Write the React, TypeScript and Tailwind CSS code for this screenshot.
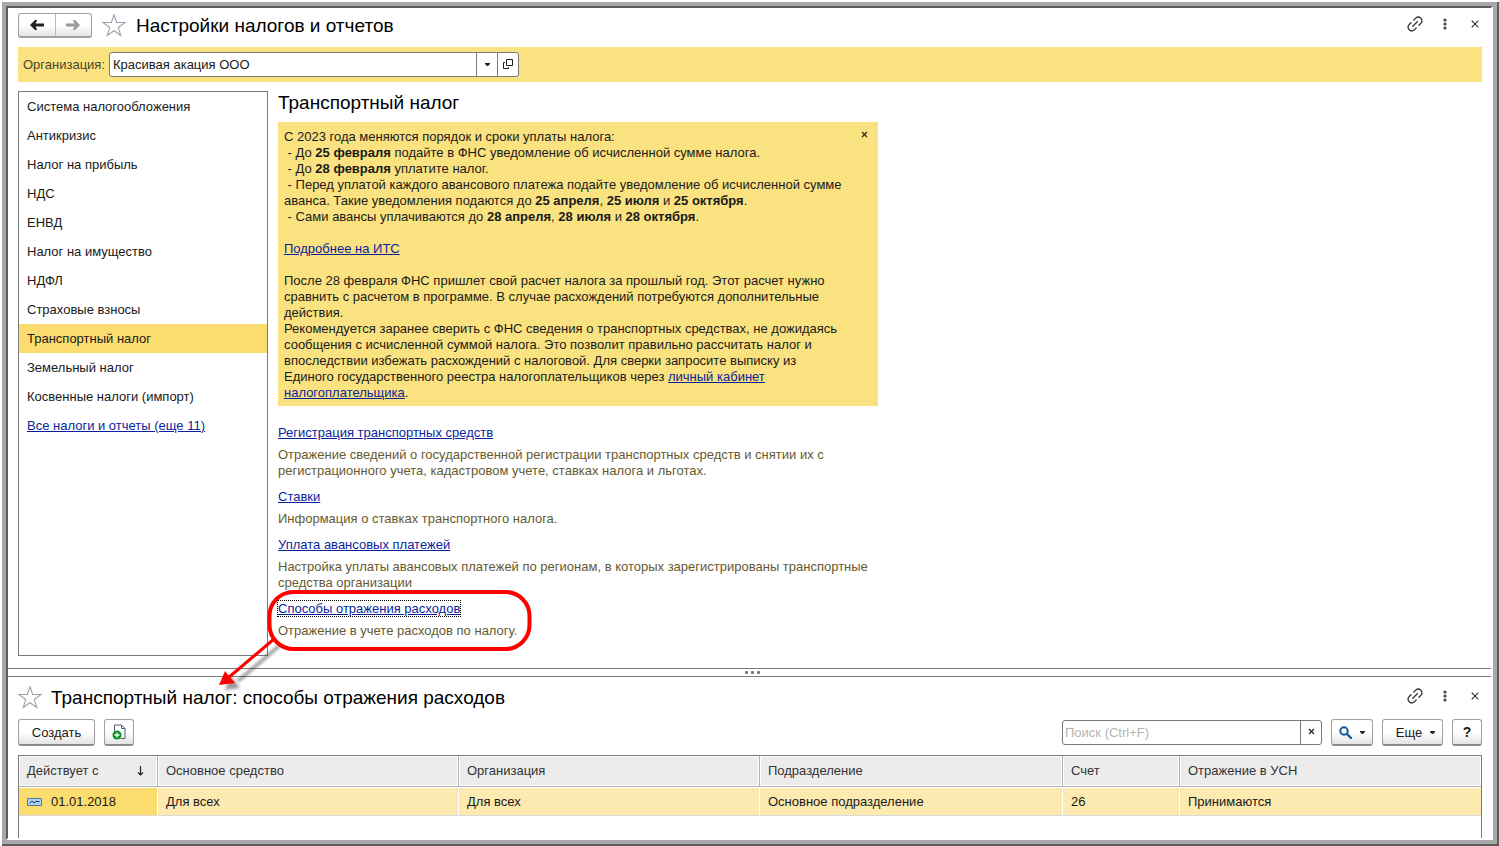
import type { ReactNode } from "react";

const taxes = [
  "Система налогообложения",
  "Антикризис",
  "Налог на прибыль",
  "НДС",
  "ЕНВД",
  "Налог на имущество",
  "НДФЛ",
  "Страховые взносы",
  "Транспортный налог",
  "Земельный налог",
  "Косвенные налоги (импорт)",
];

const columns = ["Действует с", "Основное средство", "Организация", "Подразделение", "Счет", "Отражение в УСН"];

const buttonClass =
  "flex items-center justify-center rounded-[3px] border border-[#a0a0a0] border-b-2 border-b-[#8c8c8c] bg-linear-to-b from-white from-50% to-[#e4e4e4]";

function Star() {
  return (
    <svg width="24" height="24" viewBox="0 1 24 24" fill="#fff" stroke="#9ba5b0" strokeWidth="1.100">
      <path d="M12 1.800 14.700 9.500H23l-6.800 5 2.600 8L12 17.700 5.200 22.500l2.600-8L1 9.500h8.300z" />
    </svg>
  );
}

function LinkIcon() {
  return (
    <svg width="16" height="16" viewBox="0 0 16 16" fill="none" stroke="#333" strokeWidth="1.300" strokeLinecap="round">
      <path d="M5.700 10.300 10.300 5.700" />
      <path d="M6.800 4 8.900 1.900Q11.500 0 13.800 2.200 16 4.600 14.100 7.100L12 9.200" />
      <path d="M9.200 12 7.100 14.100Q4.500 16 2.200 13.800 0 11.400 1.900 8.900L4 6.800" />
    </svg>
  );
}

function Cross({ small }: { small?: boolean }) {
  return small ? (
    <svg width="7" height="7" viewBox="0 0 7 7" stroke="#2b2b2b" strokeWidth="1.300">
      <path d="M1 1l5 5M6 1 1 6" />
    </svg>
  ) : (
    <svg width="8" height="8" viewBox="0 0 8 8" stroke="#333" strokeWidth="1.200">
      <path d="M.7.7l6.600 6.600M7.300.7.7 7.300" />
    </svg>
  );
}

function Caret() {
  return (
    <svg width="5" height="3" viewBox="0 0 5 3" fill="#222">
      <path d="M0 0h5v1L3 3H2L0 1z" />
    </svg>
  );
}

function WindowTools() {
  return (
    <div className="-mr-2 ml-auto flex items-center pb-[3px]">
      <button aria-label="Получить ссылку" className="flex w-[30px] justify-center">
        <LinkIcon />
      </button>
      <button aria-label="Меню" className="flex w-[30px] justify-center">
        <svg width="4" height="12" viewBox="0 0 4 12" fill="#444">
          <circle cx="2" cy="2" r="1.600" />
          <circle cx="2" cy="6" r="1.600" />
          <circle cx="2" cy="10" r="1.600" />
        </svg>
      </button>
      <button aria-label="Закрыть" className="flex w-[30px] justify-center">
        <Cross />
      </button>
    </div>
  );
}

function A({ children }: { children: ReactNode }) {
  return (
    <a href="#" className="text-[#0a1f9c] underline">
      {children}
    </a>
  );
}

function Section({ title, children }: { title: string; children: ReactNode }) {
  return (
    <section className="flex flex-col gap-1.5">
      <h3>
        <A>{title}</A>
      </h3>
      <p className="text-[#665a30]">{children}</p>
    </section>
  );
}

function Callout() {
  return (
    <svg
      className="pointer-events-none absolute -top-[17px] -left-[68px] max-w-none"
      width="340"
      height="110"
      viewBox="0 0 340 110"
      fill="none"
    >
      <defs>
        <filter id="soft" x="-20%" y="-20%" width="150%" height="150%">
          <feGaussianBlur stdDeviation="1.800" />
        </filter>
      </defs>
      <g filter="url(#soft)" opacity=".5" transform="translate(6 5)">
        <path d="M63 57 22 92" stroke="#333" strokeWidth="3.500" />
        <path d="M9 101 15 87 20 94 24 99z" fill="#333" />
      </g>
      <rect x="59.500" y="8" width="260" height="57" rx="24" stroke="#f00" strokeWidth="4" />
      <path d="M64 55 18 94" stroke="#f00" strokeWidth="3" />
      <path d="M9 101 15 87 19 92 25 99z" fill="#f00" />
    </svg>
  );
}

function Th({ children }: { children: ReactNode }) {
  return (
    <th className="h-[31px] border-r border-b border-[#b0b0b0] p-0 text-left font-normal last:border-r-0">
      <div className="m-px flex h-[28px] items-center bg-[#ececec] pr-3 pl-[7px] text-[#333]">{children}</div>
    </th>
  );
}

function Td({ children }: { children: ReactNode }) {
  return (
    <td className="h-[29px] border-t border-r border-b border-t-white border-r-white border-b-[#d9d9d9] bg-[#fdeab0] bg-clip-padding p-0 pl-2 first:bg-[#fbdc6e] last:border-r-0">
      {children}
    </td>
  );
}

export default function App() {
  return (
    <div className="flex min-h-screen flex-col bg-white pt-[2px] pl-[2px] font-['Liberation_Sans',Arial,sans-serif] text-[13px] leading-4 text-[#1a1a1a]">
      <div className="flex grow flex-col border-r-2 border-b-2 border-[#5c5c5c]">
        <div className="flex grow flex-col border-4 border-[#a8a8a8]">
          <div className="flex grow flex-col border-2 border-t-[#5c5c5c] border-r-white border-b-white border-l-[#5c5c5c]">
            <main className="pt-[5px] pr-[9px] pb-3 pl-[10px]">
              <header className="flex h-[25px] items-center">
                <div className="flex h-[25px] w-[74px] overflow-hidden rounded-[3px] border border-b-2 border-[#a0a0a0] bg-linear-to-b from-white from-50% to-[#e4e4e4]">
                  <button aria-label="Назад" className="flex flex-1 items-center justify-center border-r border-[#b8b8b8]">
                    <svg width="14" height="10" viewBox="0 0 14 10">
                      <path d="M0 5 5 0h2.200L5.500 3.500H14v3H5.500L7.200 10H5z" fill="#222" />
                    </svg>
                  </button>
                  <button aria-label="Вперед" className="flex flex-1 items-center justify-center">
                    <svg width="14" height="10" viewBox="0 0 14 10">
                      <path d="M14 5 9 0H6.800l1.700 3.500H0v3h8.500L6.800 10H9z" fill="#999" />
                    </svg>
                  </button>
                </div>
                <button aria-label="В избранное" className="mr-2.5 ml-2.5">
                  <Star />
                </button>
                <h1 className="text-[19px] leading-6 text-black">Настройки налогов и отчетов</h1>
                <WindowTools />
              </header>

              <div className="mt-[9px] flex h-[35px] items-center bg-[#fbe280] pl-[5px]">
                <label htmlFor="org" className="w-[86px] text-[#4b4528]">
                  Организация:
                </label>
                <div className="flex h-[25px] w-[410px] overflow-hidden rounded-[3px] border border-[#7a7a7a] bg-white">
                  <input id="org" defaultValue="Красивая акация ООО" className="min-w-0 flex-1 px-[3px] outline-none" />
                  <button aria-label="Выбрать" className="flex w-[21px] items-center justify-center border-l border-[#7a7a7a]">
                    <Caret />
                  </button>
                  <button aria-label="Открыть" className="flex w-[21px] items-center justify-center border-l border-[#7a7a7a] pb-0.5">
                    <svg width="10" height="10" viewBox="0 0 10 10" fill="none" stroke="#222">
                      <path d="M3.500.5h6v6h-6zM2 3.500H.5v6h5V8" />
                    </svg>
                  </button>
                </div>
              </div>

              <div className="mt-[9px] flex gap-2.5">
                <nav className="h-[565px] w-[250px] shrink-0 border border-[#7a7a7a]">
                  <ul>
                    {taxes.map((t) => (
                      <li key={t}>
                        <button
                          className={
                            t === "Транспортный налог"
                              ? "h-[29px] w-full bg-[#fbdc6e] px-2 text-left"
                              : "h-[29px] w-full px-2 text-left"
                          }
                        >
                          {t}
                        </button>
                      </li>
                    ))}
                    <li className="flex h-[29px] items-center px-2">
                      <A>Все налоги и отчеты (еще 11)</A>
                    </li>
                  </ul>
                </nav>

                <article className="w-[600px]">
                  <h2 className="mb-[7px] text-[19px] leading-6 text-black">Транспортный налог</h2>
                  <div className="relative bg-[#fbe280] pt-[7px] pr-8 pb-[5px] pl-1.5">
                    <button aria-label="Скрыть" className="absolute top-[9px] right-[10px]">
                      <Cross small />
                    </button>
                    <p>С 2023 года меняются порядок и сроки уплаты налога:</p>
                    <p>
                      &nbsp;- До <b>25 февраля</b> подайте в ФНС уведомление об исчисленной сумме налога.
                    </p>
                    <p>
                      &nbsp;- До <b>28 февраля</b> уплатите налог.
                    </p>
                    <p>
                      &nbsp;- Перед уплатой каждого авансового платежа подайте уведомление об исчисленной сумме аванса. Такие
                      уведомления подаются до <b>25 апреля</b>, <b>25 июля</b> и <b>25 октября</b>.
                    </p>
                    <p>
                      &nbsp;- Сами авансы уплачиваются до <b>28 апреля</b>, <b>28 июля</b> и <b>28 октября</b>.
                    </p>
                    <p className="my-4">
                      <A>Подробнее на ИТС</A>
                    </p>
                    <p>
                      После 28 февраля ФНС пришлет свой расчет налога за прошлый год. Этот расчет нужно сравнить с расчетом в
                      программе. В случае расхождений потребуются дополнительные действия.
                    </p>
                    <p>
                      Рекомендуется заранее сверить с ФНС сведения о транспортных средствах, не дожидаясь сообщения с
                      исчисленной суммой налога. Это позволит правильно рассчитать налог и впоследствии избежать расхождений с
                      налоговой. Для сверки запросите выписку из Единого государственного реестра налогоплательщиков через{" "}
                      <A>личный кабинет налогоплательщика</A>.
                    </p>
                  </div>

                  <div className="mt-[19px] flex flex-col gap-2.5">
                    <Section title="Регистрация транспортных средств">
                      Отражение сведений о государственной регистрации транспортных средств и снятии их с регистрационного
                      учета, кадастровом учете, ставках налога и льготах.
                    </Section>
                    <Section title="Ставки">Информация о ставках транспортного налога.</Section>
                    <Section title="Уплата авансовых платежей">
                      Настройка уплаты авансовых платежей по регионам, в которых зарегистрированы транспортные средства
                      организации
                    </Section>
                    <div className="relative">
                      <section className="flex flex-col gap-1.5">
                        <h3>
                          <a href="#" className="text-[#0a1f9c] underline outline-1 outline-black outline-dotted">
                            Способы отражения расходов
                          </a>
                        </h3>
                        <p className="text-[#665a30]">Отражение в учете расходов по налогу.</p>
                      </section>
                      <Callout />
                    </div>
                  </div>
                </article>
              </div>
            </main>

            <div className="flex h-[9px] shrink-0 items-center justify-center gap-[3px] border-y border-[#7a7a7a] pl-1.5">
              <span className="size-[3px] rounded-[1px] bg-[#777]" />
              <span className="size-[3px] rounded-[1px] bg-[#777]" />
              <span className="size-[3px] rounded-[1px] bg-[#777]" />
            </div>

            <section className="flex grow flex-col pt-2 pr-[9px] pl-[10px]">
              <header className="flex h-[25px] items-center">
                <button aria-label="В избранное" className="mr-[9px]">
                  <Star />
                </button>
                <h2 className="text-[19px] leading-6 text-black">Транспортный налог: способы отражения расходов</h2>
                <WindowTools />
              </header>

              <div className="mt-[9px] flex h-[27px]">
                <button className={`${buttonClass} w-[77px] pt-px`}>Создать</button>
                <button aria-label="Создать копированием" className={`${buttonClass} ml-[9px] w-[30px]`}>
                  <svg width="15" height="16" viewBox="0 0 15 16" fill="none">
                    <path d="M2.500 7V1h7L13 4.500V14.500H8.500" stroke="#4d5f73" />
                    <path d="M9.500 1v3.500H13" stroke="#4d5f73" />
                    <circle cx="5" cy="11" r="4.500" fill="#0f8f1f" />
                    <path d="M5 8.500v5M2.500 11h5" stroke="#fff" strokeWidth="1.300" />
                  </svg>
                </button>
                <div className="mt-px ml-auto flex h-[25px] w-[260px] overflow-hidden rounded-[3px] border border-[#7a7a7a]">
                  <input
                    aria-label="Поиск"
                    placeholder="Поиск (Ctrl+F)"
                    className="min-w-0 flex-1 px-[2px] outline-none placeholder:text-[#b3b3b3]"
                  />
                  <button aria-label="Очистить" className="flex w-[21px] items-center justify-center border-l border-[#7a7a7a] pb-0.5">
                    <Cross small />
                  </button>
                </div>
                <button aria-label="Найти" className={`${buttonClass} ml-[9px] w-[42px] gap-2`}>
                  <svg width="13" height="13" viewBox="0 0 13 13" fill="none" stroke="#125a9c">
                    <circle cx="5" cy="5" r="3.700" strokeWidth="2" />
                    <path d="m8 8 4 4" strokeWidth="2.400" strokeLinecap="round" />
                  </svg>
                  <Caret />
                </button>
                <button className={`${buttonClass} ml-[9px] w-[61px] gap-2 pt-px pl-1.5`}>
                  Еще <Caret />
                </button>
                <button aria-label="Справка" className={`${buttonClass} ml-[9px] w-[30px] text-[14px] font-bold`}>
                  ?
                </button>
              </div>

              <div className="mt-[9px] grow border border-b-0 border-[#7a7a7a]">
                <table className="w-full table-fixed border-separate border-spacing-0">
                  <colgroup>
                    <col className="w-[139px]" />
                    <col className="w-[301px]" />
                    <col className="w-[301px]" />
                    <col className="w-[303px]" />
                    <col className="w-[117px]" />
                    <col />
                  </colgroup>
                  <thead>
                    <tr>
                      {columns.map((c, i) => (
                        <Th key={c}>
                          {c}
                          {i === 0 && (
                            <svg className="ml-auto" width="7" height="10" viewBox="0 0 7 10" fill="none" stroke="#222">
                              <path d="M3.500 0v9M1 6.500l2.500 2.500L6 6.500" strokeWidth="1.200" />
                            </svg>
                          )}
                        </Th>
                      ))}
                    </tr>
                  </thead>
                  <tbody>
                    <tr>
                      <Td>
                        <span className="flex items-center gap-[9px]">
                          <svg width="15" height="8" viewBox="0 0 15 8" fill="none">
                            <path d="M.5.5h14v7H.5z" fill="#a8d1f5" stroke="#56789a" />
                            <path d="M2.500 5.500 5 3l2 2 2-1.500h3.500" stroke="#123a70" />
                          </svg>
                          01.01.2018
                        </span>
                      </Td>
                      <Td>Для всех</Td>
                      <Td>Для всех</Td>
                      <Td>Основное подразделение</Td>
                      <Td>26</Td>
                      <Td>Принимаются</Td>
                    </tr>
                  </tbody>
                </table>
              </div>
            </section>
          </div>
        </div>
      </div>
    </div>
  );
}
